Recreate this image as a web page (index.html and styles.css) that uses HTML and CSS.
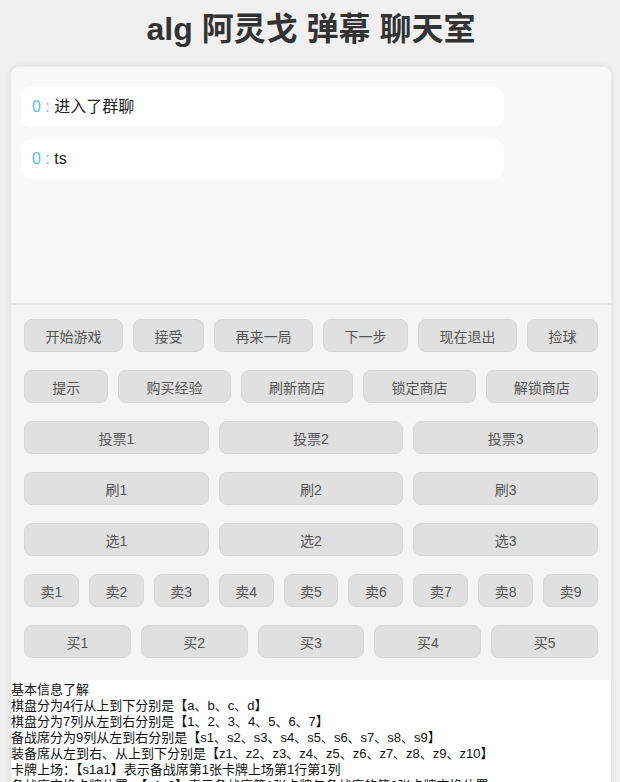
FILE: index.html
```html
<!DOCTYPE html>
<html lang="zh-CN">
<head>
    <meta charset="UTF-8">
    <meta name="viewport" content="width=device-width, initial-scale=1.0">
    <title>alg 阿灵戈 弹幕 聊天室</title>
    <link rel="stylesheet" href="styles.css">
</head>
<body>
    <h1>alg 阿灵戈 弹幕 聊天室</h1>
    <div class="container">
        <div id="messages" class="messages">
            <div class="message"><span class="user">0 :</span> 进入了群聊</div>
            <div class="message"><span class="user">0 :</span> ts</div>
        </div>

        <div class="controls">
            <div class="btn-row">
                <button>开始游戏</button>
                <button>接受</button>
                <button>再来一局</button>
                <button>下一步</button>
                <button>现在退出</button>
                <button>捡球</button>
            </div>
            <div class="btn-row">
                <button>提示</button>
                <button>购买经验</button>
                <button>刷新商店</button>
                <button>锁定商店</button>
                <button>解锁商店</button>
            </div>
            <div class="btn-row even">
                <button>投票1</button>
                <button>投票2</button>
                <button>投票3</button>
            </div>
            <div class="btn-row even">
                <button>刷1</button>
                <button>刷2</button>
                <button>刷3</button>
            </div>
            <div class="btn-row even">
                <button>选1</button>
                <button>选2</button>
                <button>选3</button>
            </div>
            <div class="btn-row even">
                <button>卖1</button>
                <button>卖2</button>
                <button>卖3</button>
                <button>卖4</button>
                <button>卖5</button>
                <button>卖6</button>
                <button>卖7</button>
                <button>卖8</button>
                <button>卖9</button>
            </div>
            <div class="btn-row even">
                <button>买1</button>
                <button>买2</button>
                <button>买3</button>
                <button>买4</button>
                <button>买5</button>
            </div>
        </div>

        <div class="info">
            基本信息了解<br>
            棋盘分为4行从上到下分别是【a、b、c、d】<br>
            棋盘分为7列从左到右分别是【1、2、3、4、5、6、7】<br>
            备战席分为9列从左到右分别是【s1、s2、s3、s4、s5、s6、s7、s8、s9】<br>
            装备席从左到右、从上到下分别是【z1、z2、z3、z4、z5、z6、z7、z8、z9、z10】<br>
            卡牌上场：【s1a1】表示备战席第1张卡牌上场第1行第1列<br>
            备战席交换卡牌位置：【s1s2】表示备战席第1张卡牌与备战席的第2张卡牌交换位置<br>
            装备上场：【z1s1】表示装备席第1个装备给备战席第1张卡牌
        </div>
    </div>
</body>
</html>
```

FILE: styles.css
```css
body {
    margin: 0;
    padding: 0 9px 0 11px;
    font-family: "Liberation Sans", "Noto Sans CJK SC", sans-serif;
    background-color: #f0f0f0;
    color: #333;
}

h1 {
    margin: 6px 0 15px;
    font-size: 32px;
    line-height: 46px;
    text-align: center;
    color: #333;
}

.container {
    background-color: #fff;
    border-radius: 8px;
    box-shadow: 0 0 6px rgba(0, 0, 0, 0.1);
    overflow: hidden;
}

.messages {
    height: 196px;
    padding: 20px 10px;
    background-color: #f8f8f8;
    border-bottom: 2px solid #e6e6e6;
}

.message {
    width: 461px;
    padding: 10px 11px;
    margin-bottom: 12px;
    background-color: #fff;
    border-radius: 10px;
    font-size: 16px;
    line-height: 20px;
    color: #222;
}

.message .user {
    color: #5bc0de;
}

.controls {
    padding: 14px 13px 22px;
    background-color: #f5f5f5;
    display: flex;
    flex-direction: column;
    gap: 18px;
}

.btn-row {
    display: flex;
    gap: 10px;
}

.btn-row button {
    flex: 1 1 auto;
    height: 33px;
    padding: 0 8px;
    font-family: inherit;
    font-size: 14px;
    color: #555;
    background-color: #e0e0e0;
    border: 1px solid #d6d6d6;
    border-radius: 8px;
}

.btn-row.even button {
    flex: 1 1 0;
}

.info {
    padding: 2px 0 0;
    font-size: 13px;
    line-height: 16px;
    color: #111;
}
```
